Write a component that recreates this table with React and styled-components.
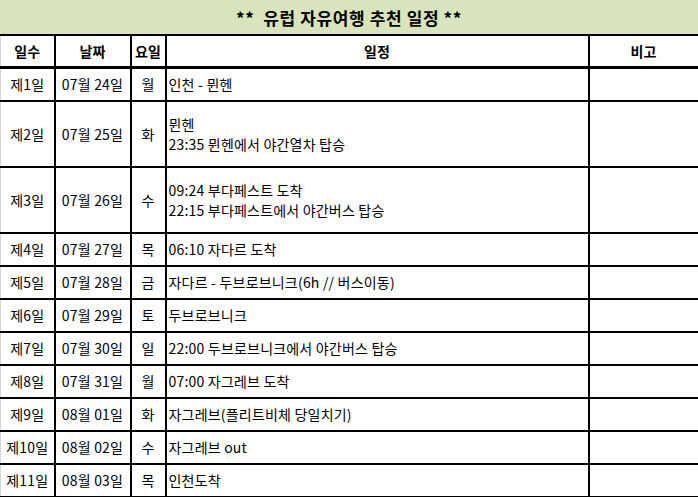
import React from 'react';
import styled, { createGlobalStyle } from 'styled-components';

const GlobalStyle = createGlobalStyle`
    html, body {
        margin: 0;
        padding: 0;
        background: #fff;
    }
    body {
        font-family: "Noto Sans CJK KR", "Noto Sans", sans-serif;
        color: #000;
    }
`;

const Sheet = styled.div`
    width: 698px;
    height: 497px;
    overflow: hidden;
    background: #fff;
`;

const Title = styled.div`
    height: 34px;
    background: #d8e4bc;
    border-bottom: 2px solid #000;
    display: flex;
    align-items: center;
    justify-content: center;
    font-size: 17px;
    font-weight: 700;
    white-space: pre;
    letter-spacing: 0.6px;
`;

const Table = styled.table`
    width: 698px;
    border-collapse: collapse;
    table-layout: fixed;
    font-size: 14px;
    letter-spacing: 0.2px;
`;

const HeadCell = styled.th`
    height: 30px;
    padding: 0;
    font-weight: 700;
    text-align: center;
    border: 2px solid #000;
    border-top: none;
    border-bottom-width: 3px;
    &:first-child {
        border-left: 1px solid #d4d4d4;
    }
`;

const Cell = styled.td`
    padding: 0 ${p => (p.$left ? '2px' : '0')};
    text-align: ${p => (p.$left ? 'left' : 'center')};
    vertical-align: middle;
    border: 2px solid #000;
    line-height: 20px;
    white-space: nowrap;
    overflow: hidden;
    &:first-child {
        border-left: 1px solid #d4d4d4;
    }
`;

const Row = styled.tr`
    height: ${p => p.$h}px;
`;

const rows = [
    ['제1일', '07월 24일', '월', ['인천 - 뮌헨']],
    ['제2일', '07월 25일', '화', ['뮌헨', '23:35 뮌헨에서 야간열차 탑승']],
    ['제3일', '07월 26일', '수', ['09:24 부다페스트 도착', '22:15 부다페스트에서 야간버스 탑승']],
    ['제4일', '07월 27일', '목', ['06:10 자다르 도착']],
    ['제5일', '07월 28일', '금', ['자다르 - 두브로브니크(6h // 버스이동)']],
    ['제6일', '07월 29일', '토', ['두브로브니크']],
    ['제7일', '07월 30일', '일', ['22:00 두브로브니크에서 야간버스 탑승']],
    ['제8일', '07월 31일', '월', ['07:00 자그레브 도착']],
    ['제9일', '08월 01일', '화', ['자그레브(플리트비체 당일치기)']],
    ['제10일', '08월 02일', '수', ['자그레브 out']],
    ['제11일', '08월 03일', '목', ['인천도착']],
];

const App = () => (
    <Sheet>
        <GlobalStyle />
        <Title>{'**  유럽 자유여행 추천 일정 **'}</Title>
        <Table>
            <colgroup>
                <col style={{ width: 54 }} />
                <col style={{ width: 76 }} />
                <col style={{ width: 35 }} />
                <col style={{ width: 423 }} />
                <col style={{ width: 110 }} />
            </colgroup>
            <thead>
                <tr>
                    <HeadCell>일수</HeadCell>
                    <HeadCell>날짜</HeadCell>
                    <HeadCell>요일</HeadCell>
                    <HeadCell>일정</HeadCell>
                    <HeadCell>비고</HeadCell>
                </tr>
            </thead>
            <tbody>
                {rows.map(([day, date, dow, plan]) => (
                    <Row key={day} $h={plan.length > 1 ? 66 : 33}>
                        <Cell>{day}</Cell>
                        <Cell>{date}</Cell>
                        <Cell>{dow}</Cell>
                        <Cell $left>
                            {plan.map((line, i) => (
                                <div key={i}>{line}</div>
                            ))}
                        </Cell>
                        <Cell />
                    </Row>
                ))}
            </tbody>
        </Table>
    </Sheet>
);

export default App;
